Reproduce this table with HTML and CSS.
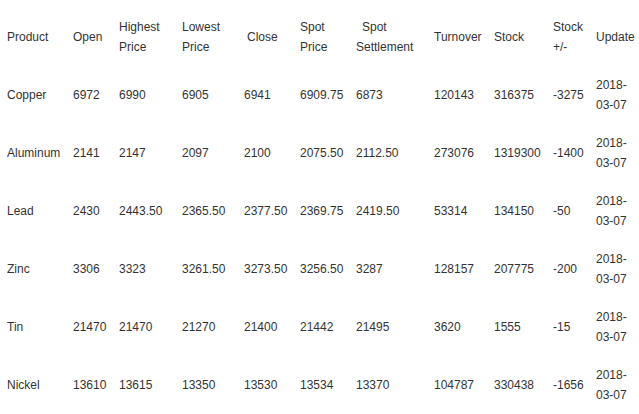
FILE: index.html
```html
<!DOCTYPE html>
<html>
<head>
<meta charset="utf-8">
<link rel="stylesheet" href="styles.css">
</head>
<body>
<table class="prices">
  <thead>
    <tr>
      <th class="c-product">Product</th>
      <th class="c-open">Open</th>
      <th class="c-high">Highest Price</th>
      <th class="c-low">Lowest Price</th>
      <th class="c-close"><span class="shift1">Close</span></th>
      <th class="c-spot">Spot Price</th>
      <th class="c-settle"><span class="shift2">Spot</span> Settlement</th>
      <th class="c-turn">Turnover</th>
      <th class="c-stock">Stock</th>
      <th class="c-chg">Stock +/-</th>
      <th class="c-upd">Update</th>
    </tr>
  </thead>
  <tbody>
    <tr><td>Copper</td><td>6972</td><td>6990</td><td>6905</td><td>6941</td><td>6909.75</td><td>6873</td><td>120143</td><td>316375</td><td>-3275</td><td>2018-03-07</td></tr>
    <tr><td>Aluminum</td><td>2141</td><td>2147</td><td>2097</td><td>2100</td><td>2075.50</td><td>2112.50</td><td>273076</td><td>1319300</td><td>-1400</td><td>2018-03-07</td></tr>
    <tr><td>Lead</td><td>2430</td><td>2443.50</td><td>2365.50</td><td>2377.50</td><td>2369.75</td><td>2419.50</td><td>53314</td><td>134150</td><td>-50</td><td>2018-03-07</td></tr>
    <tr><td>Zinc</td><td>3306</td><td>3323</td><td>3261.50</td><td>3273.50</td><td>3256.50</td><td>3287</td><td>128157</td><td>207775</td><td>-200</td><td>2018-03-07</td></tr>
    <tr><td>Tin</td><td>21470</td><td>21470</td><td>21270</td><td>21400</td><td>21442</td><td>21495</td><td>3620</td><td>1555</td><td>-15</td><td>2018-03-07</td></tr>
    <tr><td>Nickel</td><td>13610</td><td>13615</td><td>13350</td><td>13530</td><td>13534</td><td>13370</td><td>104787</td><td>330438</td><td>-1656</td><td>2018-03-07</td></tr>
  </tbody>
</table>
</body>
</html>
```
FILE: styles.css
```css
html, body {
  margin: 0;
  padding: 0;
  background: #ffffff;
}

body {
  font-family: "Liberation Sans", Arial, sans-serif;
  font-size: 12px;
  line-height: 20px;
  color: #333333;
  overflow: hidden;
}

.prices {
  margin-top: 8px;
  width: 639px;
  table-layout: fixed;
  border-collapse: collapse;
}

.prices th,
.prices td {
  box-sizing: border-box;
  padding: 9px 0 9px 7px;
  text-align: left;
  vertical-align: middle;
  font-weight: normal;
  height: 58px;
}

.c-product { width: 66px; }
.c-open { width: 46px; }
.c-high { width: 63px; }
.c-low { width: 62px; }
.c-close { width: 56px; }
.c-spot { width: 56px; }
.c-settle { width: 78px; }
.c-turn { width: 60px; }
.c-stock { width: 59px; }
.c-chg { width: 43px; }
.c-upd { width: 50px; }

.shift1 { padding-left: 3px; }
.shift2 { padding-left: 6px; }
```
